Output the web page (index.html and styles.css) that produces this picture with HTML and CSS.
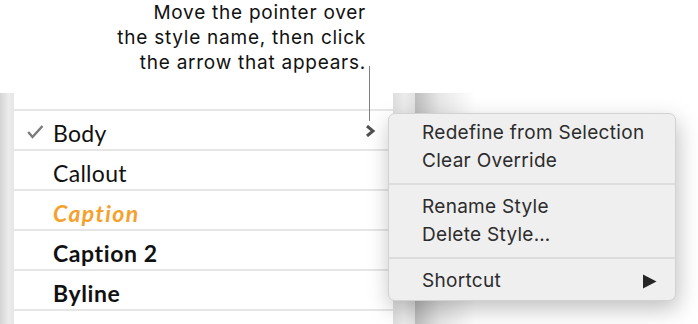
FILE: index.html
```html
<!DOCTYPE html>
<html>
<head>
<meta charset="utf-8">
<link rel="stylesheet" href="styles.css">
</head>
<body>
<div class="page">
  <div class="callout">
    <div>Move the pointer over</div>
    <div>the style name, then click</div>
    <div>the arrow that appears.</div>
  </div>
  <div class="panel">
    <div class="edge-left"></div>
    <div class="list">
      <div class="row row-top"></div>
      <div class="row">
        <span class="check"><svg width="17" height="14" viewBox="0 0 17 14"><path d="M1.2 7 L5.5 12 L15.5 1" fill="none" stroke="#7a7a7a" stroke-width="2.4"/></svg></span>
        <span class="name">Body</span>
        <svg class="chev" width="11" height="12" viewBox="0 0 11 12"><path d="M2 1 L8 6 L2 11" fill="none" stroke="#505050" stroke-width="3"/></svg>
      </div>
      <div class="row"><span class="check"></span><span class="name">Callout</span></div>
      <div class="row"><span class="check"></span><span class="name caption">Caption</span></div>
      <div class="row"><span class="check"></span><span class="name bold">Caption 2</span></div>
      <div class="row"><span class="check"></span><span class="name bold">Byline</span></div>
      <div class="row row-end"></div>
    </div>
    <div class="edge-right"></div>
    <div class="shade"></div>
  </div>
  <div class="leader"></div>
  <div class="menu">
    <div class="item">Redefine from Selection</div>
    <div class="item">Clear Override</div>
    <div class="sep"></div>
    <div class="item">Rename Style</div>
    <div class="item">Delete Style…</div>
    <div class="sep"></div>
    <div class="item submenu"><span>Shortcut</span><svg class="tri" width="15" height="15" viewBox="0 0 15 15"><path d="M1 0.5 L14.5 7.5 L1 14.5 Z" fill="#262626"/></svg></div>
  </div>
</div>
</body>
</html>
```
FILE: styles.css
```css
html, body {
  margin: 0;
  padding: 0;
  background: #fff;
}
.page {
  position: relative;
  width: 698px;
  height: 324px;
  overflow: hidden;
}
.callout {
  width: 366px;
  height: 93px;
  box-sizing: border-box;
  padding-top: 0px;
  text-align: right;
  font-family: Inter, "Liberation Sans", sans-serif;
  font-size: 19px;
  letter-spacing: 0.75px;
  line-height: 25px;
  color: #111;
}
.panel {
  display: flex;
  height: 231px;
}
.edge-left {
  width: 14px;
  background: linear-gradient(to right, #d4d4d4, #ececec 60%, #e6e6e6);
}
.list {
  width: 379px;
  background: #fff;
  font-family: Lato, "Open Sans", sans-serif;
  font-size: 23px;
  color: #111;
}
.row {
  height: 40px;
  border-bottom: 2px solid #e6e6e6;
  box-sizing: border-box;
  display: flex;
  align-items: center;
  padding-top: 6px;
  padding-right: 17px;
}
.row-top {
  height: 18px;
}
.row-end {
  border-bottom: none;
}
.check {
  flex: none;
  width: 39px;
  padding-left: 13px;
  box-sizing: border-box;
  display: flex;
  margin-top: -3px;
}
.name {
  flex: 1;
  letter-spacing: 0.3px;
}
.caption {
  color: #f6a12c;
  font-style: italic;
  font-weight: bold;
  letter-spacing: 1.4px;
}
.bold {
  font-weight: bold;
  letter-spacing: 0.6px;
}
.chev {
  margin-top: -4px;
}
.edge-right {
  width: 22px;
  background: linear-gradient(to right, #dedede, #ebebeb 50%, #e2e2e2);
}
.shade {
  width: 60px;
  background: linear-gradient(to right, #bdbdbd, #e6e6e6 40%, #fff);
}
.leader {
  position: absolute;
  left: 369px;
  top: 66px;
  width: 1px;
  height: 55px;
  background: #7f7f7f;
}
.menu {
  position: absolute;
  left: 388px;
  top: 113px;
  width: 288px;
  height: 188px;
  box-sizing: border-box;
  padding: 5px 0 6px;
  background: #efefef;
  border: 1px solid #d2d2d2;
  border-radius: 7px;
  box-shadow: 2px 8px 22px rgba(0, 0, 0, 0.25);
  font-family: Inter, "Liberation Sans", sans-serif;
  font-size: 19px;
  letter-spacing: 0.3px;
  color: #2c2c2c;
}
.item {
  height: 28px;
  line-height: 28px;
  padding-left: 33px;
  padding-right: 18px;
}
.submenu {
  display: flex;
  justify-content: space-between;
  align-items: center;
}
.sep {
  height: 18px;
  position: relative;
}
.sep::after {
  content: "";
  position: absolute;
  left: 0;
  right: 0;
  top: 8px;
  height: 2px;
  background: #dcdcdc;
}
```
